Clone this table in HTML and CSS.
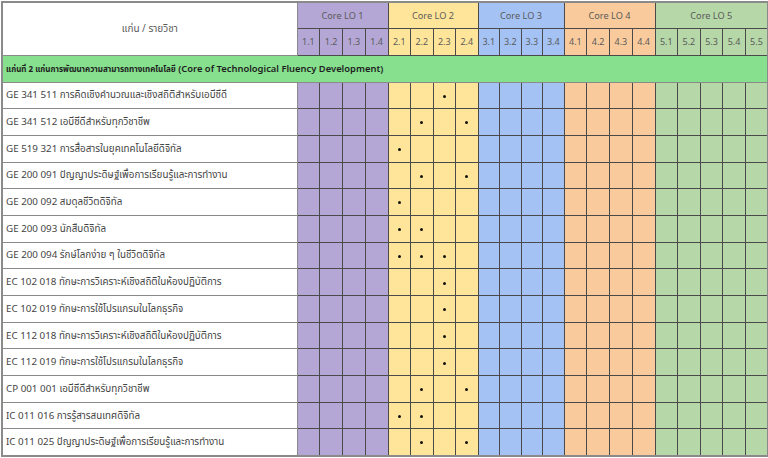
FILE: index.html
```html
<!DOCTYPE html>
<html lang="th">
<head>
<meta charset="utf-8">
<title>Core LO Mapping</title>
<link rel="stylesheet" href="styles.css">
</head>
<body>
<div class="wrap">
<table class="map">
  <colgroup>
    <col class="c-name">
    <col class="c1"><col class="c1"><col class="c1"><col class="c1">
    <col class="c2"><col class="c2"><col class="c2"><col class="c2">
    <col class="c3"><col class="c3"><col class="c3"><col class="c3">
    <col class="c4"><col class="c4"><col class="c4"><col class="c4">
    <col class="c5"><col class="c5"><col class="c5"><col class="c5"><col class="c5">
  </colgroup>
  <thead>
    <tr class="h1">
      <th class="name-h" rowspan="2">แก่น / รายวิชา</th>
      <th class="lo1" colspan="4">Core LO 1</th>
      <th class="lo2" colspan="4">Core LO 2</th>
      <th class="lo3" colspan="4">Core LO 3</th>
      <th class="lo4" colspan="4">Core LO 4</th>
      <th class="lo5" colspan="5">Core LO 5</th>
    </tr>
    <tr class="h2">
      <th class="lo1">1.1</th><th class="lo1">1.2</th><th class="lo1">1.3</th><th class="lo1">1.4</th>
      <th class="lo2">2.1</th><th class="lo2">2.2</th><th class="lo2">2.3</th><th class="lo2">2.4</th>
      <th class="lo3">3.1</th><th class="lo3">3.2</th><th class="lo3">3.3</th><th class="lo3">3.4</th>
      <th class="lo4">4.1</th><th class="lo4">4.2</th><th class="lo4">4.3</th><th class="lo4">4.4</th>
      <th class="lo5">5.1</th><th class="lo5">5.2</th><th class="lo5">5.3</th><th class="lo5">5.4</th><th class="lo5">5.5</th>
    </tr>
  </thead>
  <tbody id="body">
    <tr class="group">
      <td colspan="22"><span class="th">แก่นที่ 2 แก่นการพัฒนาความสามารถทางเทคโนโลยี</span> (Core of Technological Fluency Development)</td>
    </tr>
  </tbody>
</table>
</div>
<script src="script.js"></script>
</body>
</html>
```
FILE: styles.css
```css
html, body {
  margin: 0;
  padding: 0;
  background: #ffffff;
}
.wrap {
  padding: 1px 0 0 1px;
}
.map {
  border-collapse: collapse;
  table-layout: fixed;
  width: 766px;
  font-family: "Noto Sans", "Noto Sans Thai", sans-serif;
  font-size: 9.8px;
  color: #444;
  border: 2px solid #8a8a8a;
}
.c-name { width: 295px; }
.c1 { width: 22.75px; }
.c2 { width: 22.5px; }
.c3 { width: 21.5px; }
.c4 { width: 22.75px; }
.c5 { width: 22.6px; }

.map th, .map td {
  border: 1px solid #4a4a4a;
  padding: 0;
  font-weight: normal;
  text-align: center;
  vertical-align: middle;
  overflow: hidden;
  white-space: nowrap;
}
.h1 { height: 26px; }
.h2 { height: 27px; }
.h1 th {
  color: #5a5a5a;
  font-size: 9.2px;
}
.h2 th {
  color: #5a5a5a;
  font-size: 9px;
}
.map th.name-h {
  background: #ffffff;
  border-color: #8a8a8a;
  font-size: 10px;
}
.lo1 { background: #b4a7d6; }
.lo2 { background: #ffe599; }
.lo3 { background: #a4c2f4; }
.lo4 { background: #f9cb9c; }
.lo5 { background: #b6d7a8; }

.group { height: 27px; }
.map .group td {
  background: #86e08e;
  text-align: left;
  padding-left: 3px;
  font-weight: 600;
  color: #1e1e1e;
  font-size: 9.4px;
  border-color: #8a8a8a;
}
.group .th {
  font-size: 8px;
  font-weight: 700;
}
.row { height: 26.7px; }
.map td.name {
  text-align: left;
  padding-left: 3px;
  background: #ffffff;
  border-color: #8a8a8a;
  color: #444;
}
.dot {
  display: inline-block;
  width: 3px;
  height: 3px;
  border-radius: 50%;
  background: #111;
  vertical-align: middle;
}
```
FILE: script.js
```js
var rows = [
  ["GE 341 511 การคิดเชิงคำนวณและเชิงสถิติสำหรับเอบีซีดี", [7]],
  ["GE 341 512 เอบีซีดีสำหรับทุกวิชาชีพ", [6, 8]],
  ["GE 519 321 การสื่อสารในยุคเทคโนโลยีดิจิทัล", [5]],
  ["GE 200 091 ปัญญาประดิษฐ์เพื่อการเรียนรู้และการทำงาน", [6, 8]],
  ["GE 200 092 สมดุลชีวิตดิจิทัล", [5]],
  ["GE 200 093 นักสืบดิจิทัล", [5, 6]],
  ["GE 200 094 รักษ์โลกง่าย ๆ ในชีวิตดิจิทัล", [5, 6, 7]],
  ["EC 102 018 ทักษะการวิเคราะห์เชิงสถิติในห้องปฏิบัติการ", [7]],
  ["EC 102 019 ทักษะการใช้โปรแกรมในโลกธุรกิจ", [7]],
  ["EC 112 018 ทักษะการวิเคราะห์เชิงสถิติในห้องปฏิบัติการ", [7]],
  ["EC 112 019 ทักษะการใช้โปรแกรมในโลกธุรกิจ", [7]],
  ["CP 001 001 เอบีซีดีสำหรับทุกวิชาชีพ", [6, 8]],
  ["IC 011 016 การรู้สารสนเทศดิจิทัล", [5, 6]],
  ["IC 011 025 ปัญญาประดิษฐ์เพื่อการเรียนรู้และการทำงาน", [6, 8]]
];
var groups = ["lo1","lo1","lo1","lo1","lo2","lo2","lo2","lo2","lo3","lo3","lo3","lo3","lo4","lo4","lo4","lo4","lo5","lo5","lo5","lo5","lo5"];
var body = document.getElementById("body");
rows.forEach(function (r) {
  var tr = document.createElement("tr");
  tr.className = "row";
  var name = document.createElement("td");
  name.className = "name";
  name.textContent = r[0];
  tr.appendChild(name);
  for (var i = 1; i <= 21; i++) {
    var td = document.createElement("td");
    td.className = groups[i - 1];
    if (r[1].indexOf(i) !== -1) {
      var d = document.createElement("span");
      d.className = "dot";
      td.appendChild(d);
    }
    tr.appendChild(td);
  }
  body.appendChild(tr);
});
```
